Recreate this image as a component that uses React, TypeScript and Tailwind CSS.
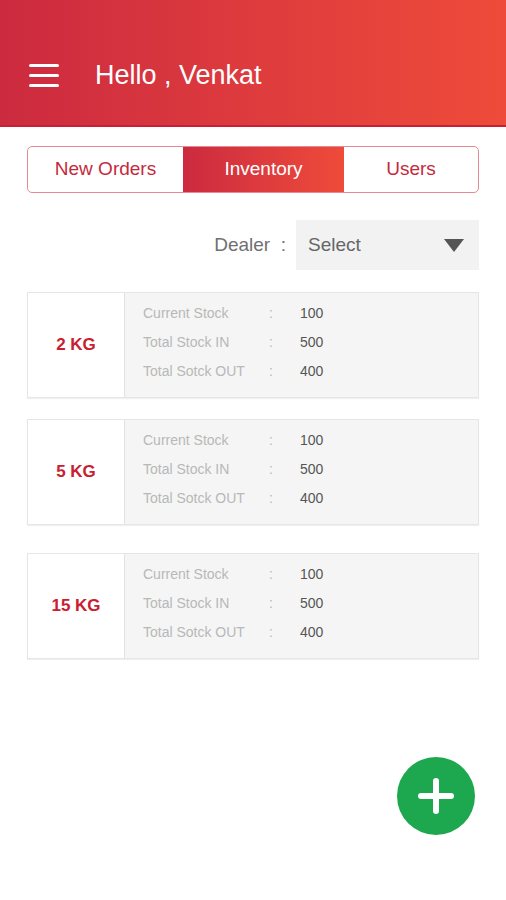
import React from "react";

const items = [
  { label: "2 KG", mt: "mt-[22px]" },
  { label: "5 KG", mt: "mt-[21px]" },
  { label: "15 KG", mt: "mt-[28px]" },
];

function Card({ label, mt }: { label: string; mt: string }) {
  const rows = [
    ["Current Stock", "100"],
    ["Total Stock IN", "500"],
    ["Total Sotck OUT", "400"],
  ];
  return (
    <div className={`${mt} mx-[27px] h-[106px] flex border border-[#e6e6e6] shadow-[0_1px_1px_rgba(0,0,0,0.06)]`}>
      <div className="w-[96px] shrink-0 bg-white flex items-center justify-center text-[17px] font-bold text-[#c8202f]">
        {label}
      </div>
      <div className="flex-1 bg-[#f5f5f5] border-l border-[#e2e2e2] pl-[18px] pt-[6px] flex flex-col">
        {rows.map(([k, v]) => (
          <div key={k} className="flex h-[29px] items-center text-[14px]">
            <span className="w-[126px] text-[#b8b8b8]">{k}</span>
            <span className="w-[31px] text-[#b8b8b8]">:</span>
            <span className="text-[#555555]">{v}</span>
          </div>
        ))}
      </div>
    </div>
  );
}

export default function App() {
  return (
    <div className="w-[506px] h-[900px] bg-white relative overflow-hidden" style={{ fontFamily: '"Liberation Sans", Arial, sans-serif' }}>
      <div className="h-[127px] bg-gradient-to-r from-[#cc2a3f] to-[#ef4b3a] border-b-[2px] border-[#c81e36] flex items-end pb-[36px] pl-[29px]">
        <div className="flex flex-col gap-[7px] w-[30px] mb-[2px]">
          <div className="h-[3px] bg-white rounded-sm" />
          <div className="h-[3px] bg-white rounded-sm" />
          <div className="h-[3px] bg-white rounded-sm" />
        </div>
        <div className="ml-[36px] text-white text-[27px] leading-none">Hello , Venkat</div>
      </div>

      <div className="mt-[19px] mx-[27px] h-[47px] flex border border-[#e58a92] rounded-[5px] overflow-hidden text-[19px]">
        <div className="w-[155px] flex items-center justify-center text-[#c42a3d]">New Orders</div>
        <div className="w-[161px] flex items-center justify-center text-white bg-gradient-to-r from-[#cc2a3f] to-[#ef4b3a]">Inventory</div>
        <div className="flex-1 flex items-center justify-center text-[#c42a3d]">Users</div>
      </div>

      <div className="mt-[27px] mr-[27px] flex justify-end items-center">
        <span className="text-[19px] text-[#707070] mr-[10px]">Dealer&nbsp;&nbsp;:</span>
        <div className="w-[183px] h-[50px] bg-[#f2f2f2] flex items-center justify-between pl-[12px] pr-[15px]">
          <span className="text-[19px] text-[#666666]">Select</span>
          <svg width="20" height="13" viewBox="0 0 20 13">
            <polygon points="0,0 20,0 10,13" fill="#555555" />
          </svg>
        </div>
      </div>

      {items.map((it) => (
        <Card key={it.label} label={it.label} mt={it.mt} />
      ))}

      <div className="absolute left-[397px] top-[757px] w-[78px] h-[78px] rounded-full bg-[#1da84f] flex items-center justify-center">
        <svg width="40" height="40" viewBox="0 0 40 40">
          <rect x="17" y="2" width="6" height="36" rx="3" fill="white" />
          <rect x="2" y="17" width="36" height="6" rx="3" fill="white" />
        </svg>
      </div>
    </div>
  );
}
